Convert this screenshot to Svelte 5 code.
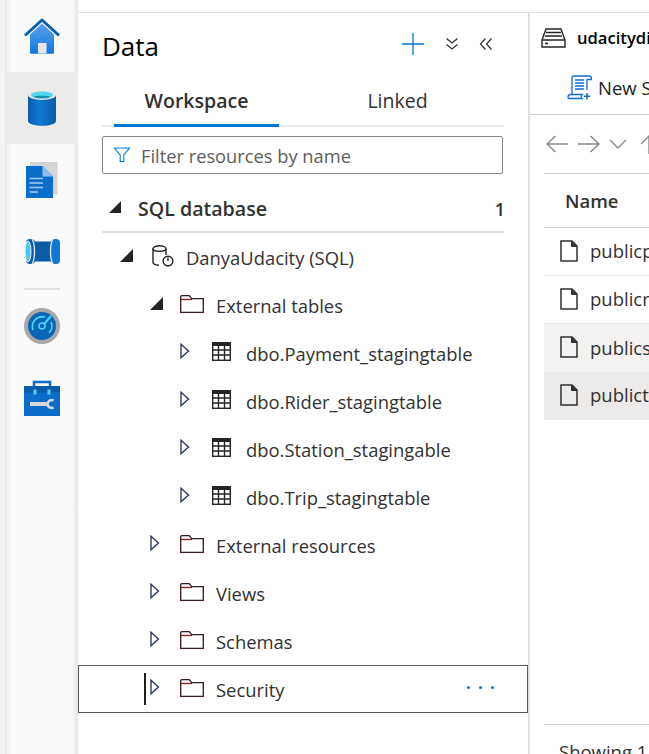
<script>
	// level drives the indent class, caret is open / closed / none
	const tree = [
		{ label: 'DanyaUdacity (SQL)', level: 2, icon: 'db', open: true },
		{ label: 'External tables', level: 3, icon: 'folder', open: true },
		{ label: 'dbo.Payment_stagingtable', level: 4, icon: 'table' },
		{ label: 'dbo.Rider_stagingtable', level: 4, icon: 'table' },
		{ label: 'dbo.Station_stagingable', level: 4, icon: 'table' },
		{ label: 'dbo.Trip_stagingtable', level: 4, icon: 'table' },
		{ label: 'External resources', level: 3, icon: 'folder' },
		{ label: 'Views', level: 3, icon: 'folder' },
		{ label: 'Schemas', level: 3, icon: 'folder' },
		{ label: 'Security', level: 3, icon: 'folder', focused: true }
	];

	const files = [
		{ name: 'publicpayment.csv', state: '' },
		{ name: 'publicrider.csv', state: '' },
		{ name: 'publicstation.csv', state: 'hover' },
		{ name: 'publictrip.csv', state: 'selected' }
	];
</script>

<div class="page">
	<div class="edge"></div>
	<nav class="rail">
		<div class="rail-item">
			<svg width="36" height="36" viewBox="0 0 36 36">
				<defs>
					<linearGradient id="homeFill" x1="0" y1="0" x2="0" y2="1">
						<stop offset="0" stop-color="#5ea0ef" />
						<stop offset="1" stop-color="#0f78dc" />
					</linearGradient>
				</defs>
				<path d="M6 16.500 18 5.500l12 11V35a.8.8 0 0 1-.8.8H6.800A.8.8 0 0 1 6 35z" fill="url(#homeFill)" />
				<path d="M1 17.500 18 2l17 15.500" fill="none" stroke="#0a5ea8" stroke-width="3" stroke-linejoin="round" />
				<rect x="14" y="25" width="8.500" height="10.500" fill="#e6e6e6" />
			</svg>
		</div>
		<div class="rail-item active">
			<svg width="28" height="36" viewBox="0 0 28 36">
				<defs>
					<linearGradient id="dbFill" x1="0" y1="0" x2="1" y2="0">
						<stop offset="0" stop-color="#0a5cab" />
						<stop offset=".4" stop-color="#0f7ad0" />
						<stop offset="1" stop-color="#0a5cab" />
					</linearGradient>
				</defs>
				<path d="M0 5v26c0 2.800 6.300 4.800 14 4.800S28 33.800 28 31V5z" fill="url(#dbFill)" />
				<ellipse cx="14" cy="5" rx="14" ry="5" fill="#e8e8e8" />
				<ellipse cx="14" cy="5" rx="11" ry="3.400" fill="#4fd8f0" />
				<path d="M5.500 6.800C8 5.500 20 5.500 22.500 6.800 20 8.800 8 8.800 5.500 6.800z" fill="#1a90b8" />
			</svg>
		</div>
		<div class="rail-item">
			<svg width="32" height="37" viewBox="0 0 32 37">
				<rect x="4" y="0" width="27.500" height="32.500" fill="#d4d4d4" />
				<path d="M0 4h16.500L27 14.500V36H0z" fill="#0a6ccb" />
				<path d="M16.500 4 27 14.500H16.500z" fill="#8cbcf2" />
				<path d="M3.500 16.500H17M3.500 21H17M3.500 25.500H17M3.500 30H12" stroke="#a5c9f2" stroke-width="1.300" />
			</svg>
		</div>
		<div class="rail-item">
			<svg width="36" height="26" viewBox="0 0 36 26">
				<rect x="7" y="2.500" width="21" height="20" fill="#0a5cab" />
				<rect x="27" y="0" width="9" height="25" rx="4" fill="#0f78d4" />
				<path d="M29 0c-2 3-2.500 7-2.500 12.500S27 22 29 25" fill="none" stroke="#e8e8e8" stroke-width="1.300" />
				<rect x="2" y="0" width="9" height="25" rx="4" fill="#0a5cab" />
				<path d="M8 0c2 3 2.500 7 2.500 12.500S10 22 8 25" fill="none" stroke="#e8e8e8" stroke-width="1.300" />
				<ellipse cx="4" cy="12.500" rx="3" ry="10.500" fill="#4fc8ea" stroke="#e8f4f8" />
			</svg>
		</div>
		<div class="rail-sep"></div>
		<div class="rail-item">
			<svg width="36" height="36" viewBox="0 0 36 36">
				<circle cx="18" cy="18" r="18" fill="#a8a8a8" />
				<circle cx="18" cy="18" r="14" fill="#0a66b8" />
				<g fill="none" stroke="#4fd4f4" stroke-width="1.600">
					<path d="M9 22a10 10 0 0 1 12-13" />
					<path d="M27 14a10 10 0 0 1-2 11" />
					<circle cx="18" cy="18" r="3" />
					<path d="M20 16l7-8" stroke-width="2" />
				</g>
			</svg>
		</div>
		<div class="rail-item">
			<svg width="36" height="36" viewBox="0 0 36 36">
				<path d="M10 7V2h16v5" fill="none" stroke="#0a6ccb" stroke-width="2.500" />
				<rect x="0" y="6" width="36" height="30" fill="#0a6ccb" />
				<rect x="0" y="6" width="36" height="6.500" fill="#0a5cab" />
				<rect x="9.500" y="9.500" width="3" height="5" fill="#4fd4f4" />
				<rect x="23.500" y="9.500" width="3" height="5" fill="#4fd4f4" />
				<path d="M6 24h17" stroke="#d8d8d8" stroke-width="4" />
				<path d="M29.500 20.500a4 4 0 1 0 0 7" fill="none" stroke="#d8d8d8" stroke-width="2.600" />
			</svg>
		</div>
	</nav>

	<div class="main">
		<div class="topbar"></div>
		<div class="panes">
			<section class="data">
				<header class="data-head">
					<h1>Data</h1>
					<div class="data-actions">
						<svg width="24" height="24" viewBox="0 0 24 24"><path d="M12 1v22M1 12h22" stroke="#0078d4" stroke-width="1.300" /></svg>
						<svg width="14" height="14" viewBox="0 0 14 14"><path d="M1.500 1.500 7 6l5.500-4.500M1.500 7.500 7 12l5.500-4.500" fill="none" stroke="#323130" stroke-width="1.300" /></svg>
						<svg width="14" height="14" viewBox="0 0 14 14"><path d="M6.500 1.500 1.500 7l5 5.500M12.500 1.500 7.500 7l5 5.500" fill="none" stroke="#323130" stroke-width="1.200" /></svg>
					</div>
				</header>

				<div class="tabs">
					<div class="tab selected">Workspace</div>
					<div class="tab">Linked</div>
				</div>

				<label class="filter">
					<svg width="18" height="18" viewBox="0 0 18 18"><path d="M1.500 2h15l-5.700 7v6.500H7.200V9z" fill="none" stroke="#0078d4" stroke-width="1.100" /></svg>
					<input type="text" placeholder="Filter resources by name" />
				</label>

				<div class="group">
					<svg class="solid" width="12" height="12" viewBox="0 0 12 12"><path d="M12 0v12H0z" fill="#252423" /></svg>
					<span class="group-name">SQL database</span>
					<span class="group-count">1</span>
				</div>

				<div class="tree">
					{#each tree as item}
						<div class="row level-{item.level}" class:focused={item.focused}>
							{#if item.focused}<span class="marker"></span>{/if}
							<span class="caret">
								{#if item.open}
									<svg width="13" height="13" viewBox="0 0 13 13"><path d="M13 0v13H0z" fill="#252423" /></svg>
								{:else}
									<svg width="10" height="16" viewBox="0 0 10 16"><path d="M1 1.200 8.500 8 1 14.800z" fill="none" stroke="#2b3a67" stroke-width="1.400" /></svg>
								{/if}
							</span>
							<span class="icon">
								{#if item.icon === 'db'}
									<svg class="nudge" width="22" height="22" viewBox="0 0 22 22" fill="none" stroke="#252423" stroke-width="1.400">
										<ellipse cx="7.500" cy="3.500" rx="6.500" ry="2.800" />
										<path d="M1 3.500v14c0 1.500 2.500 2.500 6 2.700M14 3.500V10" />
										<circle cx="16" cy="16" r="4.800" />
										<path d="M16 12.500v3.500" />
									</svg>
								{:else if item.icon === 'folder'}
									<svg width="24" height="18" viewBox="0 0 24 18" fill="none" stroke="#3a1a1a" stroke-width="1.300">
										<path d="M.7 17.300V1.700A1 1 0 0 1 1.700.7h7.500l2.500 3h11.600v13.600z" />
										<path d="M.7 4.500h11.300" stroke="#8a1f1f" />
									</svg>
								{:else}
									<svg class="nudge" width="19" height="19" viewBox="0 0 19 19" fill="none" stroke="#252423" stroke-width="1.400">
										<rect x=".7" y=".7" width="17.600" height="17.600" />
										<path d="M.7 2.500h17.600" stroke-width="3" />
										<path d="M.7 8h17.600M.7 13h17.600M6.500 3v15M12.500 3v15" />
									</svg>
								{/if}
							</span>
							<span class="label">{item.label}</span>
							{#if item.focused}
								<span class="more"><i></i><i></i><i></i></span>
							{/if}
						</div>
					{/each}
				</div>
			</section>

			<section class="content">
				<div class="crumb">
					<svg width="25" height="20" viewBox="0 0 25 20" fill="none" stroke="#252423" stroke-width="1.400">
						<path d="M1 12 5 1h15l4 11v7H1z" />
						<path d="M1 12h23M5 4.500h15M4 8h17" />
						<path d="M4 15.500h3" stroke-width="1.600" />
					</svg>
					<strong>udacitydisk</strong>
				</div>
				<div class="toolbar">
					<svg width="25" height="25" viewBox="0 0 25 25" fill="none" stroke="#0f6cd6" stroke-width="1.300">
						<path d="M5 19V3a2 2 0 0 1 2-2h15a2.500 2.500 0 0 1 2.300 3.500H20V15" />
						<path d="M1 22.500c0-2 1-3 2.500-3H15c-1 1-1 3 0 4H3c-1.200 0-2-.2-2-1z" />
						<path d="M8 5h9M8 8h9M8 11h9M8 14h9" />
						<path d="M20 18v6.500M16.800 21.300h6.500" stroke-width="1.500" />
					</svg>
					<span>New SQL script</span>
				</div>
				<div class="nav-row">
					<svg width="24" height="20" viewBox="0 0 24 20"><path d="M23 10H2M10.500 2 2 10l8.500 8" fill="none" stroke="#8a8886" stroke-width="1.400" /></svg>
					<svg width="24" height="20" viewBox="0 0 24 20"><path d="M1 10h21M13.500 2 22 10l-8.500 8" fill="none" stroke="#8a8886" stroke-width="1.400" /></svg>
					<svg width="18" height="20" viewBox="0 0 18 20"><path d="M1 6l8 8 8-8" fill="none" stroke="#8a8886" stroke-width="1.400" /></svg>
					<svg class="up" width="20" height="20" viewBox="0 0 20 20"><path d="M10 20V2M2 10l8-8 8 8" fill="none" stroke="#8a8886" stroke-width="1.400" /></svg>
				</div>
				<div class="list">
					<div class="list-head">Name</div>
					{#each files as file}
						<div class="file {file.state}">
							<svg width="18" height="22" viewBox="0 0 18 22" fill="none" stroke="#323130" stroke-width="1.500">
								<path d="M1 1h11l5 5v15H1z" />
								<path d="M11.500 1v5.500H17" fill="#323130" stroke-width="1" />
							</svg>
							<span>{file.name}</span>
						</div>
					{/each}
				</div>
				<footer class="status">Showing 1 to 4 of 4 items</footer>
			</section>
		</div>
	</div>
</div>

<style>
	:global(body) {
		margin: 0;
		background: #fff;
	}

	.page {
		display: flex;
		width: 649px;
		height: 754px;
		overflow: hidden;
		color: #323130;
		font-family: "Open Sans", "Noto Sans", sans-serif;
		font-size: 18.500px;
	}

	svg {
		flex: none;
	}

	.edge {
		width: 5px;
		flex: none;
		background: #f3f3f3;
		border-right: 1px solid #e8e8e8;
	}

	.rail {
		width: 72px;
		flex: none;
		background: linear-gradient(to right, #eeeeee, #fafafa 6px, #fafafa 66px, #e4e4e4);
	}

	.rail-item {
		display: flex;
		align-items: center;
		justify-content: center;
		height: 72px;
	}

	.rail-item.active {
		background: #edebe9;
	}

	.rail-sep {
		height: 2px;
		margin: 0 18px;
		background: #e1e1e1;
	}

	.main {
		flex: 1;
		min-width: 0;
		display: flex;
		flex-direction: column;
	}

	.topbar {
		height: 12px;
		flex: none;
		border-bottom: 1px solid #e1dfdd;
	}

	.panes {
		flex: 1;
		min-height: 0;
		display: flex;
	}

	.data {
		width: 452px;
		flex: none;
		box-sizing: border-box;
		border-right: 2px solid #e1dfdd;
	}

	.data-head {
		display: flex;
		align-items: center;
		justify-content: space-between;
		height: 62px;
		box-sizing: border-box;
		padding: 0 35px 0 24px;
	}

	h1 {
		margin: 4px 0 0;
		color: #000;
		font-size: 26px;
		font-weight: 500;
	}

	.data-actions {
		display: flex;
		align-items: center;
		gap: 20px;
	}

	.tabs {
		display: flex;
		height: 50px;
		margin: 0 24px;
		padding-left: 12px;
		border-bottom: 2px solid #edebe9;
	}

	.tab {
		flex: 1;
		box-sizing: border-box;
		padding: 12px 0 0 12px;
		text-align: center;
		font-size: 19.500px;
	}

	.tab.selected {
		flex: none;
		width: 165px;
		height: 52px;
		padding-left: 0;
		font-weight: 600;
		border-bottom: 3px solid #0078d4;
	}

	.filter {
		display: flex;
		align-items: center;
		gap: 10px;
		box-sizing: border-box;
		width: 401px;
		height: 38px;
		margin: 9px 0 0 24px;
		padding: 0 9px 0 10px;
		border: 1px solid #8a8886;
		border-radius: 2px;
		font-size: 18.300px;
	}

	.filter input {
		flex: 1;
		min-width: 0;
		padding: 0;
		border: 0;
		outline: 0;
		background: none;
		font: inherit;
	}

	.filter input::placeholder {
		color: #605e5c;
		opacity: 1;
	}

	.group {
		display: flex;
		align-items: center;
		height: 45px;
		margin: 0 24px;
		padding: 12px 0 0 7px;
		border-bottom: 2px solid #e1dfdd;
	}

	.group .solid {
		margin-right: 17px;
		margin-top: -3px;
	}

	.group-name {
		flex: 1;
		font-weight: 600;
		font-size: 19.600px;
	}

	.group-count {
		margin-right: -1px;
		font-weight: 600;
		font-size: 18px;
	}

	.row {
		position: relative;
		display: flex;
		align-items: center;
		height: 48px;
		box-sizing: border-box;
		white-space: nowrap;
	}

	.level-2 { padding-left: 42px; }
	.level-3 { padding-left: 72px; }
	.level-4 { padding-left: 102px; }

	.caret {
		display: flex;
		align-items: center;
		width: 30px;
		flex: none;
		margin-top: -4px;
	}

	.icon {
		display: flex;
		align-items: center;
		width: 36px;
		flex: none;
		margin-top: -3px;
	}

	.icon .nudge {
		margin-left: 2px;
	}

	.label {
		font-size: 18.400px;
	}

	.row.focused {
		border: 1px solid #605e5c;
		padding-left: 71px;
	}

	.marker {
		position: absolute;
		left: 65px;
		top: 7px;
		width: 2px;
		height: 32px;
		background: #201f1e;
	}

	.more {
		display: flex;
		gap: 9px;
		margin-left: auto;
		margin-right: 33px;
		margin-top: -4px;
	}

	.more i {
		width: 3px;
		height: 3px;
		border-radius: 50%;
		background: #0078d4;
	}

	.content {
		flex: 1;
		min-width: 0;
		display: flex;
		flex-direction: column;
		white-space: nowrap;
		overflow: hidden;
	}

	.crumb {
		display: flex;
		align-items: center;
		gap: 11px;
		height: 50px;
		box-sizing: border-box;
		padding: 0 0 1px 11px;
		font-size: 16.600px;
		color: #000;
	}

	.crumb strong {
		font-weight: 600;
	}

	.toolbar {
		display: flex;
		align-items: center;
		gap: 6px;
		height: 52px;
		box-sizing: border-box;
		padding: 0 0 2px 37px;
		border-bottom: 1px solid #d2d0ce;
		color: #201f1e;
	}

	.nav-row {
		display: flex;
		align-items: center;
		gap: 8px;
		height: 58px;
		padding-left: 15px;
	}

	.nav-row .up {
		margin-left: 4px;
	}

	.list {
		flex: 1;
		margin-left: 14px;
		border-top: 1px solid #d2d0ce;
	}

	.list-head {
		display: flex;
		align-items: center;
		height: 53px;
		padding-left: 21px;
		border-bottom: 1px solid #d2d0ce;
		font-weight: 600;
	}

	.file {
		display: flex;
		align-items: center;
		gap: 12px;
		height: 48px;
		box-sizing: border-box;
		padding: 0 0 2px 16px;
		border-bottom: 1px solid #edebe9;
	}

	.file.hover {
		background: #f3f2f1;
		border-bottom: 0;
	}

	.file.selected {
		background: #edebe9;
	}

	.status {
		height: 30px;
		flex: none;
		box-sizing: border-box;
		margin-left: 14px;
		padding: 14px 0 0 15px;
		border-top: 1px solid #d2d0ce;
	}
</style>
